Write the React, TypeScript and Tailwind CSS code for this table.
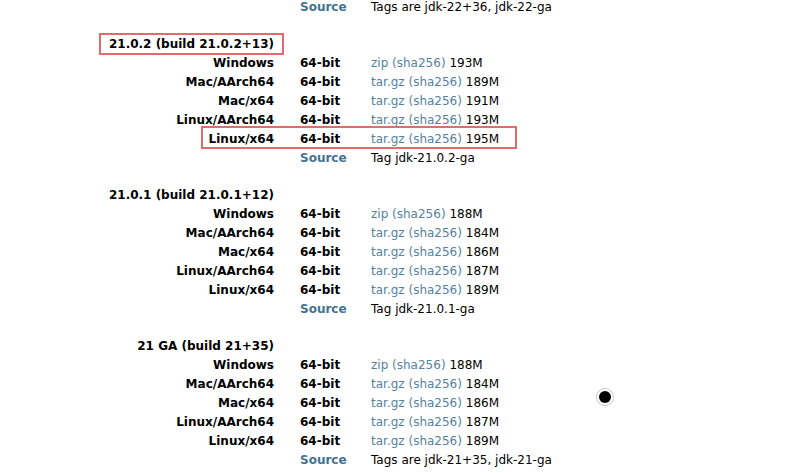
import type { ReactNode } from 'react'

interface Build {
  title: string
  highlight?: boolean
  files: { os: string; kind: string; size: string; mark?: boolean }[]
  source: string
}

const builds: Build[] = [
  {
    title: '21.0.2 (build 21.0.2+13)',
    highlight: true,
    files: [
      { os: 'Windows', kind: 'zip', size: '193M' },
      { os: 'Mac/AArch64', kind: 'tar.gz', size: '189M' },
      { os: 'Mac/x64', kind: 'tar.gz', size: '191M' },
      { os: 'Linux/AArch64', kind: 'tar.gz', size: '193M' },
      { os: 'Linux/x64', kind: 'tar.gz', size: '195M', mark: true },
    ],
    source: 'Tag jdk-21.0.2-ga',
  },
  {
    title: '21.0.1 (build 21.0.1+12)',
    files: [
      { os: 'Windows', kind: 'zip', size: '188M' },
      { os: 'Mac/AArch64', kind: 'tar.gz', size: '184M' },
      { os: 'Mac/x64', kind: 'tar.gz', size: '186M' },
      { os: 'Linux/AArch64', kind: 'tar.gz', size: '187M' },
      { os: 'Linux/x64', kind: 'tar.gz', size: '189M' },
    ],
    source: 'Tag jdk-21.0.1-ga',
  },
  {
    title: '21 GA (build 21+35)',
    files: [
      { os: 'Windows', kind: 'zip', size: '188M' },
      { os: 'Mac/AArch64', kind: 'tar.gz', size: '184M' },
      { os: 'Mac/x64', kind: 'tar.gz', size: '186M' },
      { os: 'Linux/AArch64', kind: 'tar.gz', size: '187M' },
      { os: 'Linux/x64', kind: 'tar.gz', size: '189M' },
    ],
    source: 'Tags are jdk-21+35, jdk-21-ga',
  },
]

function Row({ label, bit, children, mark }: { label?: ReactNode; bit?: ReactNode; children?: ReactNode; mark?: boolean }) {
  return (
    <div className="relative flex h-[19px] items-center whitespace-nowrap">
      <div className="w-[274px] text-right font-bold">{label}</div>
      <div className="ml-[26px] w-[71px] font-bold">{bit}</div>
      <div>{children}</div>
      {mark && (
        <span className="absolute left-[201px] top-[-3px] bottom-[-1px] w-[316px] border-2 border-[#e06c6c]" />
      )}
    </div>
  )
}

function SourceRow({ text }: { text: string }) {
  return (
    <Row bit={<span className="text-[#437291]">Source</span>}>
      <span>{text}</span>
    </Row>
  )
}

export default function App() {
  return (
    <div className="relative h-[473px] w-[789px] overflow-hidden bg-white text-[12px] text-black" style={{ fontFamily: '"DejaVu Sans", sans-serif' }}>
      <div className="-mt-[3px]">
        <SourceRow text="Tags are jdk-22+36, jdk-22-ga" />
        {builds.map(b => (
          <div key={b.title} className="mt-[18px]">
            <Row
              label={
                <span className="relative">
                  {b.title}
                  {b.highlight && (
                    <span className="absolute -left-[10px] -right-[10px] -top-[4px] -bottom-[4px] border-2 border-[#e06c6c]" />
                  )}
                </span>
              }
            />
            {b.files.map(f => (
              <Row key={f.os} label={f.os} bit="64-bit" mark={f.mark}>
                <span className="text-[#5382a1]">{f.kind}</span>{' '}
                <span className="text-[#5382a1]">(sha256)</span>{' '}
                {f.size}
              </Row>
            ))}
            <SourceRow text={b.source} />
          </div>
        ))}
      </div>
      <span className="absolute left-[596px] top-[388px] size-[18px] rounded-full border border-[#c8c8c8] bg-white p-[2px]">
        <span className="block size-full rounded-full bg-black" />
      </span>
    </div>
  )
}
